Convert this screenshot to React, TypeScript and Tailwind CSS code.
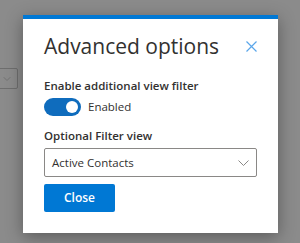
import { ChevronDown } from 'lucide-react';

export default function App() {
    return (
        <div
            className="relative w-[300px] h-[243px] overflow-hidden bg-[#8b8b8b]"
            style={{ fontFamily: '"Open Sans", "Noto Sans", sans-serif' }}
        >
            {/* page behind the overlay */}
            <div className="pt-[68px]">
                <div className="-ml-[20px] w-[38px] h-[21px] border border-[#6e6e6e] rounded-[2px] flex items-center justify-end pr-[4px]">
                    <ChevronDown className="w-[12px] h-[12px] text-[#6a6a6a]" strokeWidth={1.5} />
                </div>
            </div>

            {/* dialog */}
            <div className="absolute left-[23px] top-[15px] w-[255px] h-[218px] bg-white border-t-4 border-[#0078d4] shadow-[0_4px_16px_rgba(0,0,0,0.35)] pl-[21px] pr-[21px] pt-[12px] text-[#323130]">
                <div className="flex items-center justify-between">
                    <h2 className="text-[21px] leading-[30px] font-normal">Advanced options</h2>
                    <svg width="11" height="11" viewBox="0 0 11 11" className="mt-[1px]">
                        <path d="M0.5 0.5L10.5 10.5M10.5 0.5L0.5 10.5" stroke="#5aa6ea" strokeWidth="1.2" />
                    </svg>
                </div>

                <div className="mt-[17px] text-[11.5px] leading-[16px] font-semibold">Enable additional view filter</div>
                <div className="mt-[4px] flex items-center gap-[7px]">
                    <div className="w-[37px] h-[18px] rounded-full bg-[#0f6cbd] flex items-center justify-end pr-[3px]">
                        <div className="w-[12px] h-[12px] rounded-full bg-white" />
                    </div>
                    <span className="text-[11.5px] leading-[16px]">Enabled</span>
                </div>

                <div className="mt-[12px] text-[11.5px] leading-[16px] font-semibold">Optional Filter view</div>
                <div className="mt-[4px] h-[29px] border border-[#8a8886] rounded-[2px] flex items-center justify-between pl-[7px] pr-[7px]">
                    <span className="text-[11.5px] leading-[16px]">Active Contacts</span>
                    <svg width="11" height="6" viewBox="0 0 11 6">
                        <path d="M0.5 0.5L5.5 5.5L10.5 0.5" stroke="#8a8886" strokeWidth="1" fill="none" />
                    </svg>
                </div>

                <button className="mt-[7px] w-[71px] h-[28px] rounded-[2px] bg-[#0078d4] text-white text-[12px] leading-[16px] font-semibold">
                    Close
                </button>
            </div>
        </div>
    );
}
